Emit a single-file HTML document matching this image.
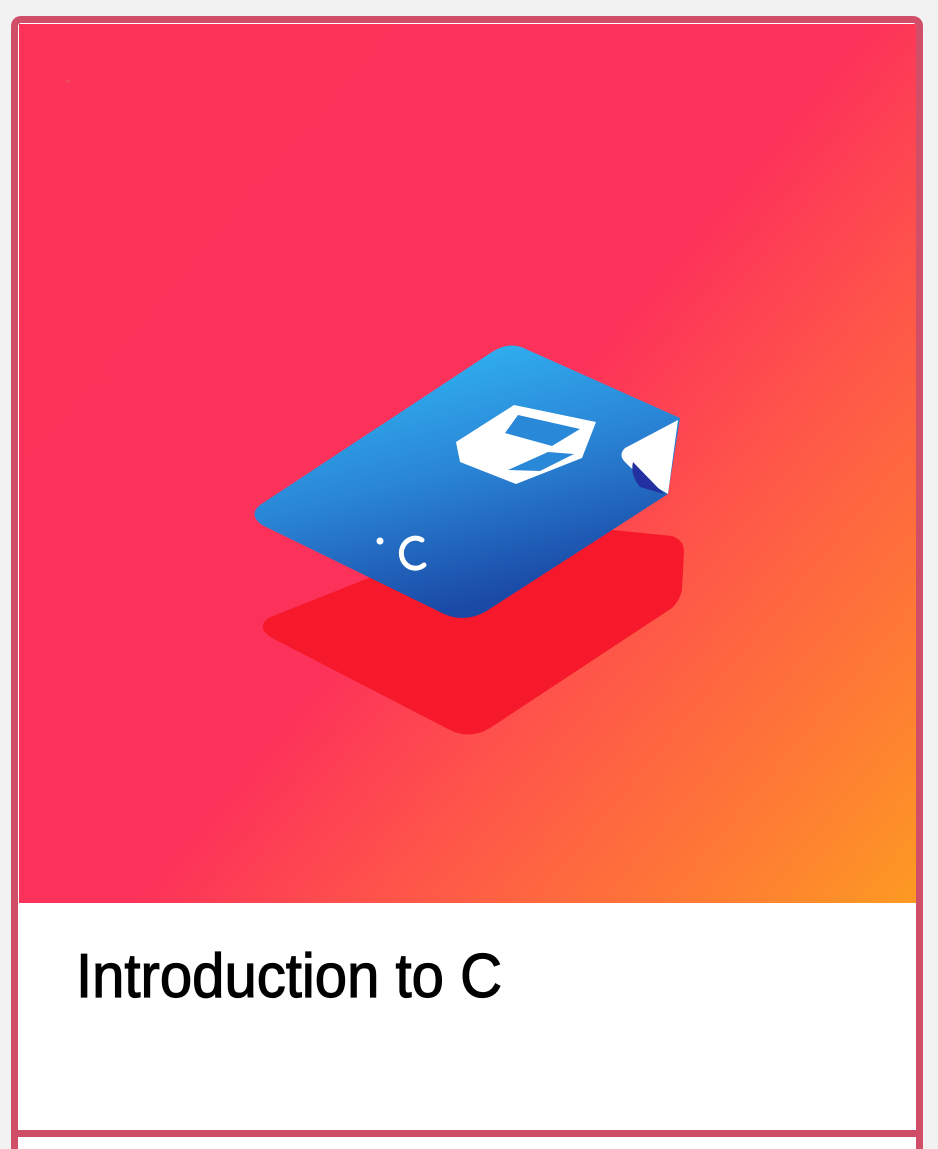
<!DOCTYPE html>
<html><head><meta charset="utf-8"><style>
html,body{margin:0;padding:0;background:#f2f2f2;width:938px;height:1149px;overflow:hidden}
.wrap{position:relative;width:938px;height:1149px;overflow:hidden}
.card{position:absolute;left:11px;top:16px;width:898px;height:1126px;border:7px solid #d14e69;border-bottom:0;border-radius:10px 10px 0 0;background:#fff;overflow:hidden}
.hero{position:absolute;left:1px;top:1px;width:897px;height:879px;background:linear-gradient(130deg,#fd3259 0%,#fd325a 52%,#fe5a47 70%,#fe7a35 86%,#fd9a22 100%)}
.bar{position:absolute;left:0;top:1107px;width:898px;height:7px;background:#cf4c66}
</style></head><body>
<div class="wrap">
<div class="card">
<div class="hero">
<svg width="897" height="879" viewBox="19 24 897 879" style="position:absolute;left:0;top:0">
<defs>
<linearGradient id="b" x1="0" y1="0" x2="0.4" y2="1">
<stop offset="0" stop-color="#33c3fb"/><stop offset="0.55" stop-color="#2a86d6"/><stop offset="1" stop-color="#1a49a6"/></linearGradient>
</defs>
<text x="66" y="86" font-size="8" fill="#c86">'''</text>
<path d="M268 618 Q256 628 272 638 L450 730 Q470 740 490 728 L672 608 Q680 600 682 590 L684 552 Q684 540 672 536 L515 520 Z" fill="#f5192b"/>
<path d="M260 505 Q248 515 262 525 L440 612 Q462 624 485 612 L668 494 L680 418 L528 350 Q510 340 492 352 Z" fill="url(#b)"/>
<path d="M625 448 L678 420 L668 494 Q640 478 625 462 Q618 455 625 448Z" fill="#fff"/>
<path d="M633 462 L664 494 L640 487 Q630 475 633 462Z" fill="#2330a0"/>
<path d="M456 442 L514 405 L596 422 L582 458 L516 484 L460 462 Z" fill="#fff"/>
<path d="M518 415 L580 429 L552 446 L505 433Z M508 470 L548 452 L574 454 L540 471Z" fill="#2a88d8"/>
<circle cx="380" cy="541" r="3.5" fill="#fff"/>
<path d="M422 540 A14 15 0 1 0 424 565" stroke="#fff" stroke-width="5" fill="none" stroke-linecap="round"/>
</svg>
</div>
<svg width="898" height="120" style="position:absolute;left:0;top:900px">
<text x="58" y="74" font-family="Liberation Sans,sans-serif" font-size="62" fill="#000" stroke="#000" stroke-width="1.2" textLength="426" lengthAdjust="spacingAndGlyphs">Introduction to C</text>
</svg>
<div class="bar"></div>
</div>
</div>
</body></html>
